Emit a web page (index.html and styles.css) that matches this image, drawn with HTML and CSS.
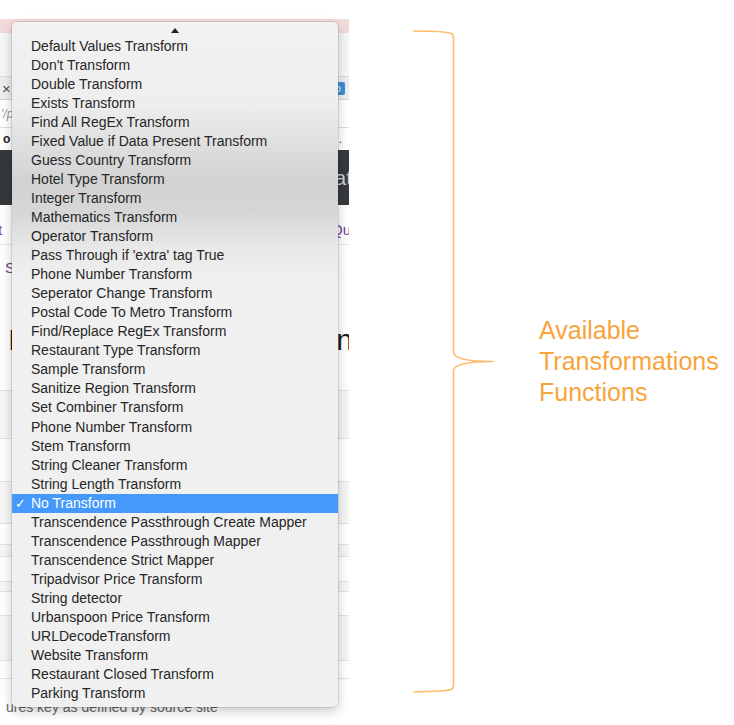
FILE: index.html
```html
<!DOCTYPE html>
<html lang="en">
<head>
<meta charset="utf-8">
<title>Transform menu</title>
<link rel="stylesheet" href="styles.css">
</head>
<body>
<div class="root">
  <div class="page">
    <div class="gap0"></div>
    <div class="alert"></div>
    <div class="toolbar-top"></div>
    <div class="toolbar"><span class="close">×</span><span class="searchbtn">o</span></div>
    <div class="inputrow"><span class="ph">'/p</span></div>
    <div class="nav"><span class="navl">o</span><span class="navr">.</span></div>
    <div class="hero"><span class="herol">C</span><span class="heror">at</span></div>
    <div class="links"><span>t</span><span>Qu</span></div>
    <div class="sub"><span>S</span></div>
    <div class="heading"><span class="hl">I</span><span class="hr">n</span></div>
    <div class="tbl">
      <div class="tr stripe h48"></div>
      <div class="tr h43"></div>
      <div class="tr stripe h42"></div>
      <div class="tr h21"></div>
      <div class="tr stripe h12"></div>
      <div class="tr h25"></div>
      <div class="tr stripe h10"></div>
      <div class="tr h24"></div>
      <div class="tr stripe h45"></div>
      <div class="tr h18"></div>
      <div class="tr h10"></div>
    </div>
    <div class="foot">ures key as defined by source site</div>

    <div class="menu">
      <div class="arrow"></div>
      <ul class="items">
        <li class="item"><span class="chk"></span>Default Values Transform</li>
        <li class="item"><span class="chk"></span>Don't Transform</li>
        <li class="item"><span class="chk"></span>Double Transform</li>
        <li class="item"><span class="chk"></span>Exists Transform</li>
        <li class="item"><span class="chk"></span>Find All RegEx Transform</li>
        <li class="item"><span class="chk"></span>Fixed Value if Data Present Transform</li>
        <li class="item"><span class="chk"></span>Guess Country Transform</li>
        <li class="item"><span class="chk"></span>Hotel Type Transform</li>
        <li class="item"><span class="chk"></span>Integer Transform</li>
        <li class="item"><span class="chk"></span>Mathematics Transform</li>
        <li class="item"><span class="chk"></span>Operator Transform</li>
        <li class="item"><span class="chk"></span>Pass Through if 'extra' tag True</li>
        <li class="item"><span class="chk"></span>Phone Number Transform</li>
        <li class="item"><span class="chk"></span>Seperator Change Transform</li>
        <li class="item"><span class="chk"></span>Postal Code To Metro Transform</li>
        <li class="item"><span class="chk"></span>Find/Replace RegEx Transform</li>
        <li class="item"><span class="chk"></span>Restaurant Type Transform</li>
        <li class="item"><span class="chk"></span>Sample Transform</li>
        <li class="item"><span class="chk"></span>Sanitize Region Transform</li>
        <li class="item"><span class="chk"></span>Set Combiner Transform</li>
        <li class="item"><span class="chk"></span>Phone Number Transform</li>
        <li class="item"><span class="chk"></span>Stem Transform</li>
        <li class="item"><span class="chk"></span>String Cleaner Transform</li>
        <li class="item"><span class="chk"></span>String Length Transform</li>
        <li class="item selected"><span class="chk">✓</span>No Transform</li>
        <li class="item"><span class="chk"></span>Transcendence Passthrough Create Mapper</li>
        <li class="item"><span class="chk"></span>Transcendence Passthrough Mapper</li>
        <li class="item"><span class="chk"></span>Transcendence Strict Mapper</li>
        <li class="item"><span class="chk"></span>Tripadvisor Price Transform</li>
        <li class="item"><span class="chk"></span>String detector</li>
        <li class="item"><span class="chk"></span>Urbanspoon Price Transform</li>
        <li class="item"><span class="chk"></span>URLDecodeTransform</li>
        <li class="item"><span class="chk"></span>Website Transform</li>
        <li class="item"><span class="chk"></span>Restaurant Closed Transform</li>
        <li class="item"><span class="chk"></span>Parking Transform</li>
      </ul>
    </div>
  </div>

  <svg class="brace" width="90" height="725" viewBox="0 0 90 725" aria-hidden="true">
    <path d="M9 31 C28 31 41 31.5 46 33.5 Q48.5 34.5 48.5 38 L48.5 352 Q48.5 361.5 88 361.5 Q48.5 361.5 48.5 371 L48.5 685 Q48.5 688.5 46 689.5 Q41 691.5 9 691.7" fill="none" stroke="#fdbb6c" stroke-width="1.6" stroke-linejoin="round" stroke-linecap="round"/>
  </svg>

  <div class="label">Available<br>Transformations<br>Functions</div>
</div>
</body>
</html>
```

FILE: styles.css
```css
html, body {
  margin: 0;
  padding: 0;
  background: #ffffff;
}

.root {
  display: flex;
  width: 734px;
  height: 725px;
  overflow: hidden;
  font-family: "Liberation Sans", Arial, sans-serif;
}

/* ---------- background page (mostly hidden by the menu) ---------- */
.page {
  position: relative;
  width: 349px;
  height: 725px;
  flex: none;
  overflow: hidden;
  background: #ffffff;
}

.gap0 { height: 19px; }

.alert {
  height: 14px;
  background: #f2dada;
}

.toolbar-top {
  height: 43px;
  background: #f6f6f6;
  border-bottom: 1px solid #dcdcdc;
}

.toolbar {
  height: 22px;
  background: #eeeeee;
  border-bottom: 1px solid #d4d4d4;
  display: flex;
  justify-content: space-between;
  align-items: center;
  padding: 0 4px 0 2px;
}

.close {
  font-size: 15px;
  color: #555;
  line-height: 1;
}

.searchbtn {
  width: 14px;
  height: 13px;
  background: #3a8fd6;
  color: #fff;
  font-size: 10px;
  line-height: 13px;
  text-align: center;
  border-radius: 2px;
}

.inputrow {
  height: 27px;
  border-bottom: 1px solid #dddddd;
  display: flex;
  align-items: center;
}

.ph {
  font-style: italic;
  color: #999;
  font-size: 12px;
  padding-left: 1px;
}

.nav {
  height: 22px;
  display: flex;
  justify-content: space-between;
  align-items: center;
}

.navl {
  font-weight: bold;
  font-size: 12px;
  color: #222;
  padding-left: 3px;
}

.navr {
  font-size: 12px;
  color: #333;
  padding-right: 7px;
}

.hero {
  height: 55px;
  background: #373a3d;
  display: flex;
  justify-content: space-between;
  align-items: center;
  overflow: hidden;
}

.herol {
  color: #373a3d;
}

.heror {
  color: #d0d0d0;
  font-size: 21px;
  margin-right: -3px;
}

.links {
  height: 39px;
  border-bottom: 1px solid #e6e6e6;
  display: flex;
  justify-content: space-between;
  align-items: flex-end;
  color: #6b3f91;
  font-size: 15px;
  line-height: 28px;
}

.links span:first-child { margin-left: -2px; }
.links span:last-child { margin-right: -2px; }

.sub {
  height: 45px;
  display: flex;
  align-items: center;
  color: #6b3f91;
  font-size: 15px;
  padding-left: 5px;
}

.heading {
  height: 100px;
  display: flex;
  justify-content: space-between;
  align-items: center;
  font-size: 30px;
  color: #1a1a1a;
}

.hl {
  padding-left: 8px;
  font-size: 30px;
}

.hr {
  margin-right: -4px;
}

.tbl {
  display: flex;
  flex-direction: column;
}

.tr {
  border-top: 1px solid #e2e2e2;
}

.tr.stripe { background: #f6f6f6; }

.h48 { height: 47px; }
.h43 { height: 42px; }
.h42 { height: 41px; }
.h21 { height: 20px; }
.h12 { height: 11px; }
.h25 { height: 24px; }
.h10 { height: 9px; }
.h24 { height: 23px; }
.h45 { height: 44px; }
.h18 { height: 17px; }

.foot {
  position: absolute;
  left: 6px;
  top: 699px;
  font-size: 14px;
  color: #666;
  white-space: nowrap;
}

/* ---------- popup menu ---------- */
.menu {
  position: absolute;
  left: 12px;
  top: 22px;
  width: 326px;
  height: 685px;
  box-sizing: border-box;
  border-radius: 5px;
  padding-top: 14.6px;
  background: linear-gradient(to bottom,
    #f2f2f2 0px,
    #eeeeee 80px,
    #dedede 125px,
    #d2d2d2 160px,
    #d6d6d6 190px,
    #e8e8e8 225px,
    #f0f0f0 260px,
    #f0f0f0 100%);
  box-shadow: 0 0 0 0.5px rgba(0, 0, 0, 0.18), 0 4px 12px rgba(0, 0, 0, 0.22);
  overflow: hidden;
}

.arrow {
  position: absolute;
  left: 159px;
  top: 6px;
  width: 0;
  height: 0;
  border-left: 4px solid transparent;
  border-right: 4px solid transparent;
  border-bottom: 5px solid #222;
}

.items {
  list-style: none;
  margin: 0;
  padding: 0;
}

.item {
  display: flex;
  align-items: center;
  height: 19.06px;
  line-height: 19.06px;
  font-size: 14px;
  color: #262626;
  white-space: nowrap;
}

.chk {
  width: 19px;
  flex: none;
  box-sizing: border-box;
  padding-left: 3px;
  font-family: "DejaVu Sans", sans-serif;
  font-size: 13px;
}

.item.selected {
  background: #4499fa;
  color: #ffffff;
}

/* ---------- annotation ---------- */
.brace {
  flex: none;
  margin-left: 56px;
}

.label {
  margin-left: 44px;
  margin-top: 315px;
  align-self: flex-start;
  font-size: 25px;
  line-height: 31px;
  color: #f9a33c;
  white-space: nowrap;
}
```
